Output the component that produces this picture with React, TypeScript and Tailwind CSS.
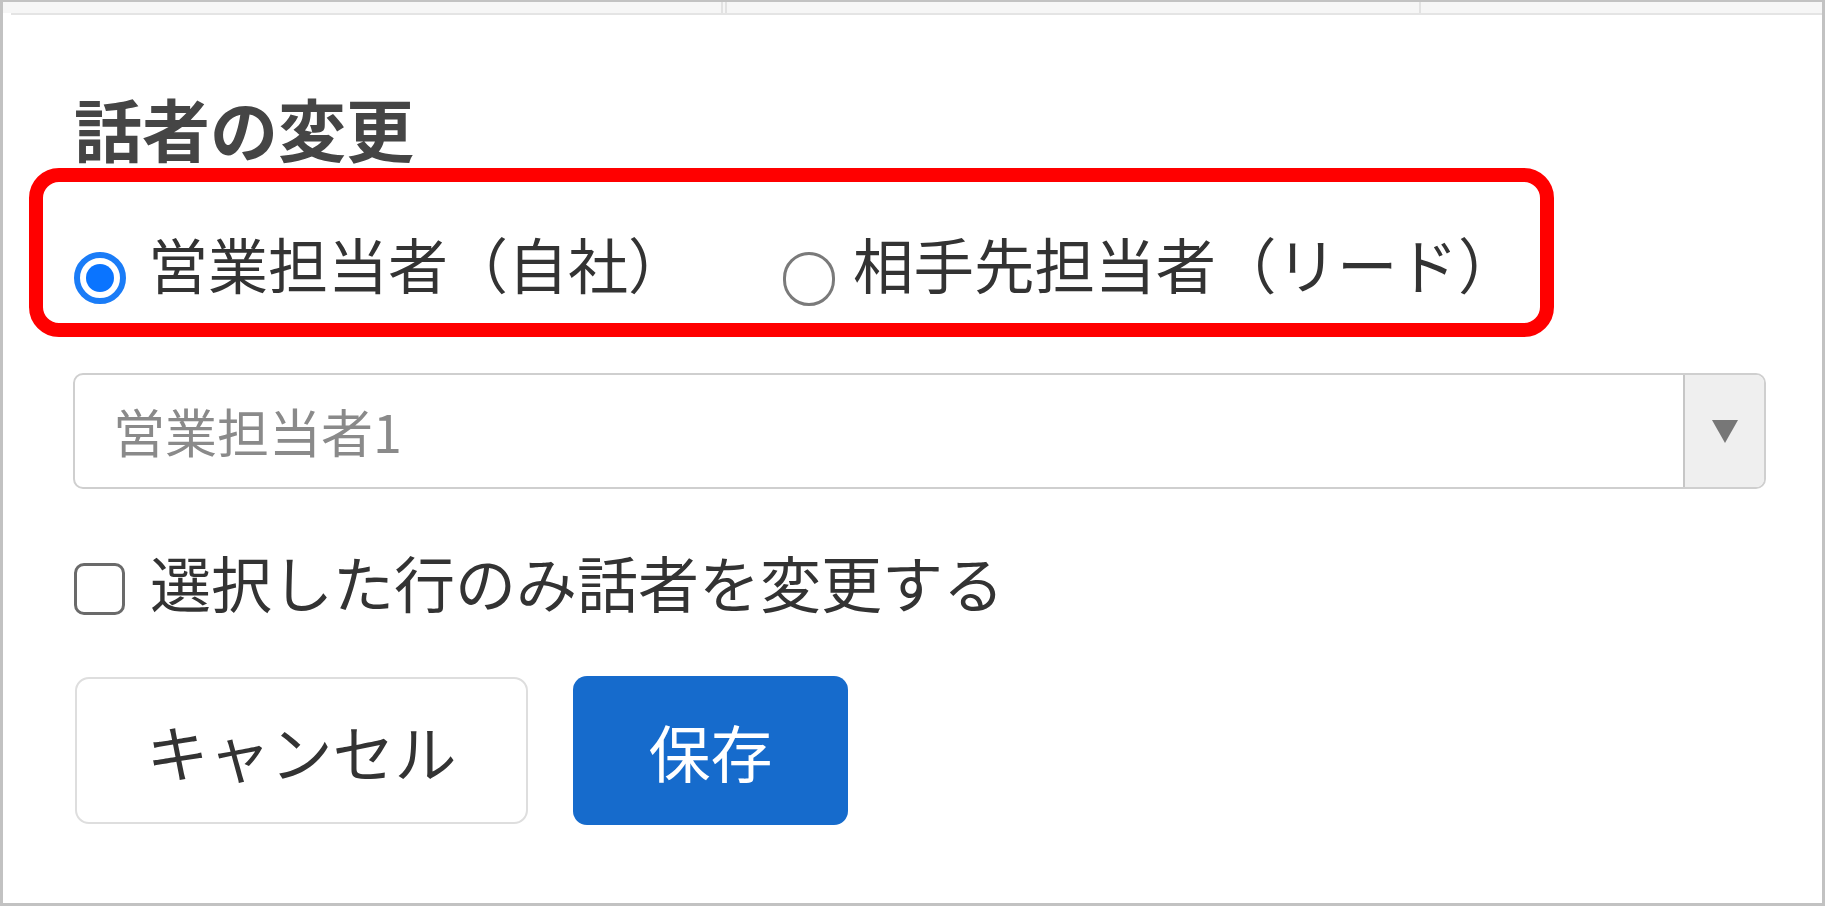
import React from "react";

const FONT = { fontFamily: '"Noto Sans CJK JP", "Noto Sans", sans-serif' };

export default function App() {
  return (
    <div className="w-[1825px] h-[907px] bg-white" style={FONT}>
      <div className="h-[906px] flex flex-col border-t-2 border-l-[3px] border-r-[3px] border-b-[3px] border-[#c2c2c2] bg-white">
        {/* table header strip behind the dialog */}
        <div className="h-[11px] flex bg-[#f6f6f6]">
          <div className="w-[720px] border-r-2 border-[#e2e2e2]" />
          <div className="w-[2px] bg-[#f6f6f6]" />
          <div className="w-[696px] border-l-2 border-r-2 border-[#e2e2e2]" />
          <div className="flex-1" />
        </div>
        <div className="h-[2px] bg-[#e4e4e4] ml-[8px]" />

        {/* dialog content */}
        <div className="flex flex-col">
          <h2 className="mt-[79px] pl-[71px] text-[68px] leading-none font-bold text-[#454545]">
            話者の変更
          </h2>

          {/* red annotation box with radios */}
          <div className="mt-[6px] ml-[26px] w-[1525px] h-[169px] border-[14px] border-[#ff0000] rounded-[30px] flex items-start pl-[31px] pt-[51px]">
            <label className="flex items-start">
              <span className="mt-[19px] w-[52px] h-[52px] rounded-full border-[6px] border-[#1a7cf7] flex items-center justify-center">
                <span className="w-[28px] h-[28px] rounded-full bg-[#0a74ff]" />
              </span>
              <span className="ml-[22px] text-[60px] leading-none text-[#333333]">
                営業担当者（自社）
              </span>
            </label>
            <label className="flex items-start ml-[95px]">
              <span className="mt-[19px] w-[52px] h-[54px] rounded-full border-[3px] border-[#7a7a7a]" />
              <span className="ml-[18px] text-[60.5px] leading-none text-[#333333]">
                相手先担当者（リード）
              </span>
            </label>
          </div>

          {/* select */}
          <div className="mt-[36px] ml-[70px] w-[1693px] h-[116px] flex border-2 border-[#cfcfcf] rounded-[10px] overflow-hidden">
            <div className="flex-1 flex items-center pl-[38px] text-[52px] text-[#8a8a8a]">
              営業担当者1
            </div>
            <div className="w-[81px] bg-[#efefef] border-l-2 border-[#c6c6c6] flex items-center justify-center">
              <svg width="26" height="23" viewBox="0 0 26 23">
                <polygon points="0,0 26,0 13,23" fill="#777777" />
              </svg>
            </div>
          </div>

          {/* checkbox */}
          <label className="mt-[62px] ml-[71px] flex items-start">
            <span className="mt-[12px] w-[51px] h-[52px] rounded-[10px] border-[3px] border-[#6a6a6a]" />
            <span className="ml-[25px] text-[61px] leading-none text-[#333333]">
              選択した行のみ話者を変更する
            </span>
          </label>

          {/* buttons */}
          <div className="mt-[62px] ml-[72px] flex gap-[45px]">
            <button className="w-[453px] h-[147px] rounded-[14px] border-2 border-[#dedede] bg-white text-[62px] leading-none text-[#333333]">
              キャンセル
            </button>
            <button className="w-[275px] h-[149px] -mt-[1px] rounded-[14px] bg-[#166bcc] text-[62px] leading-none text-white">
              保存
            </button>
          </div>
        </div>
      </div>
    </div>
  );
}
